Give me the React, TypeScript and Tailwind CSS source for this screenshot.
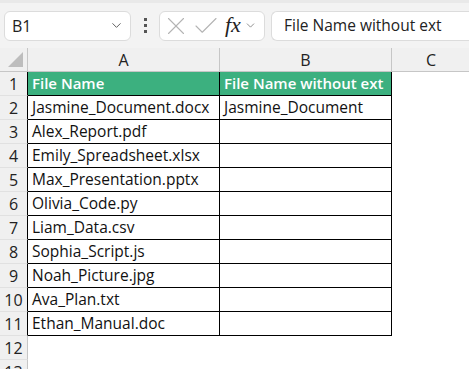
import React from 'react';
import { ChevronDown, X, Check } from 'lucide-react';

const files = [
	'Jasmine_Document.docx',
	'Alex_Report.pdf',
	'Emily_Spreadsheet.xlsx',
	'Max_Presentation.pptx',
	'Olivia_Code.py',
	'Liam_Data.csv',
	'Sophia_Script.js',
	'Noah_Picture.jpg',
	'Ava_Plan.txt',
	'Ethan_Manual.doc',
];

const font = { fontFamily: '"Open Sans", "Liberation Sans", sans-serif' };

function RowHead({ n, dark }: { n: number; dark?: boolean }) {
	return (
		<div
			className={`w-[28px] shrink-0 h-full flex items-center justify-center bg-[#f0f0f0] border-r border-b border-b-[#e1e1e1] ${
				dark ? 'border-r-black' : 'border-r-[#c6c6c6]'
			}`}
		>
			<span className="text-[16px] text-[#222]">{n}</span>
		</div>
	);
}

export default function App() {
	return (
		<div
			className="w-[469px] h-[369px] overflow-hidden bg-white text-black"
			style={font}
		>
			{/* formula bar */}
			<div className="h-[48px] bg-[#f3f3f3] border-t-[3px] border-t-[#e9e9e9] flex items-center pl-[4px] gap-[6px]">
				<div className="w-[127px] h-[30px] bg-white border border-[#dcdcdc] rounded-[6px] flex items-center justify-between pl-[7px] pr-[6px]">
					<span className="text-[16px] text-[#222]">B1</span>
					<ChevronDown className="w-[15px] h-[15px] text-[#555]" strokeWidth={1.5} />
				</div>
				<div className="w-[16px] flex flex-col items-center gap-[3px]">
					<div className="w-[3px] h-[3px] bg-[#555]" />
					<div className="w-[3px] h-[3px] bg-[#555]" />
					<div className="w-[3px] h-[3px] bg-[#555]" />
				</div>
				<div className="w-[106px] h-[30px] bg-white border border-[#dcdcdc] rounded-[6px] flex items-center pl-[1px] gap-[0px]">
					<X className="w-[30px] h-[30px] text-[#b4b4b4]" strokeWidth={0.9} />
					<Check className="w-[30px] h-[30px] text-[#b4b4b4]" strokeWidth={0.9} />
					<span
						className="text-[22px] italic text-[#222] -mt-[3px] ml-[4px]"
						style={{ fontFamily: '"Liberation Serif", serif' }}
					>
						fx
					</span>
					<ChevronDown className="w-[13px] h-[13px] text-[#777] ml-[3px]" strokeWidth={1.5} />
				</div>
				<div className="flex-1 h-[30px] bg-white border border-[#dcdcdc] rounded-l-[6px] border-r-0 flex items-center pl-[12px]">
					<span className="text-[15.5px] text-[#222]">File Name without ext</span>
				</div>
			</div>

			{/* column headers */}
			<div className="h-[24px] flex bg-[#f0f0f0] border-b border-[#c6c6c6]">
				<div className="w-[28px] shrink-0 relative border-r border-[#c6c6c6]">
					<div
						className="absolute right-[4px] bottom-[4px] w-[15px] h-[15px] bg-[#bdbdbd]"
						style={{ clipPath: 'polygon(100% 0, 100% 100%, 0 100%)' }}
					/>
				</div>
				<div className="w-[192px] shrink-0 border-r border-[#c6c6c6] flex items-center justify-center text-[16px] text-[#222]">
					A
				</div>
				<div className="w-[172px] shrink-0 border-r border-[#c6c6c6] flex items-center justify-center text-[16px] text-[#222]">
					B
				</div>
				<div className="w-[78px] shrink-0 flex items-center justify-center text-[16px] text-[#222]">
					C
				</div>
			</div>

			{/* header row */}
			<div className="h-[24px] flex">
				<RowHead n={1} dark />
				<div className="w-[192px] shrink-0 bg-[#3cb07f] border-r border-b border-black flex items-center pl-[4px] text-[15px] font-semibold text-white">
					File Name
				</div>
				<div className="w-[172px] shrink-0 bg-[#3cb07f] border-r border-b border-black flex items-center pl-[4px] text-[15px] font-semibold text-white">
					File Name without ext
				</div>
			</div>

			{files.map((f, i) => (
				<div key={f} className="h-[24px] flex">
					<RowHead n={i + 2} dark />
					<div className="w-[192px] shrink-0 border-r border-b border-black flex items-center pl-[4px] text-[15.5px] text-[#111]">
						{f}
					</div>
					<div className="w-[172px] shrink-0 border-r border-b border-black flex items-center pl-[4px] text-[15.5px] text-[#111]">
						{i === 0 ? 'Jasmine_Document' : ''}
					</div>
				</div>
			))}

			<div className="h-[24px] flex">
				<RowHead n={12} />
			</div>
			<div className="h-[24px] flex">
				<RowHead n={13} />
			</div>
		</div>
	);
}
